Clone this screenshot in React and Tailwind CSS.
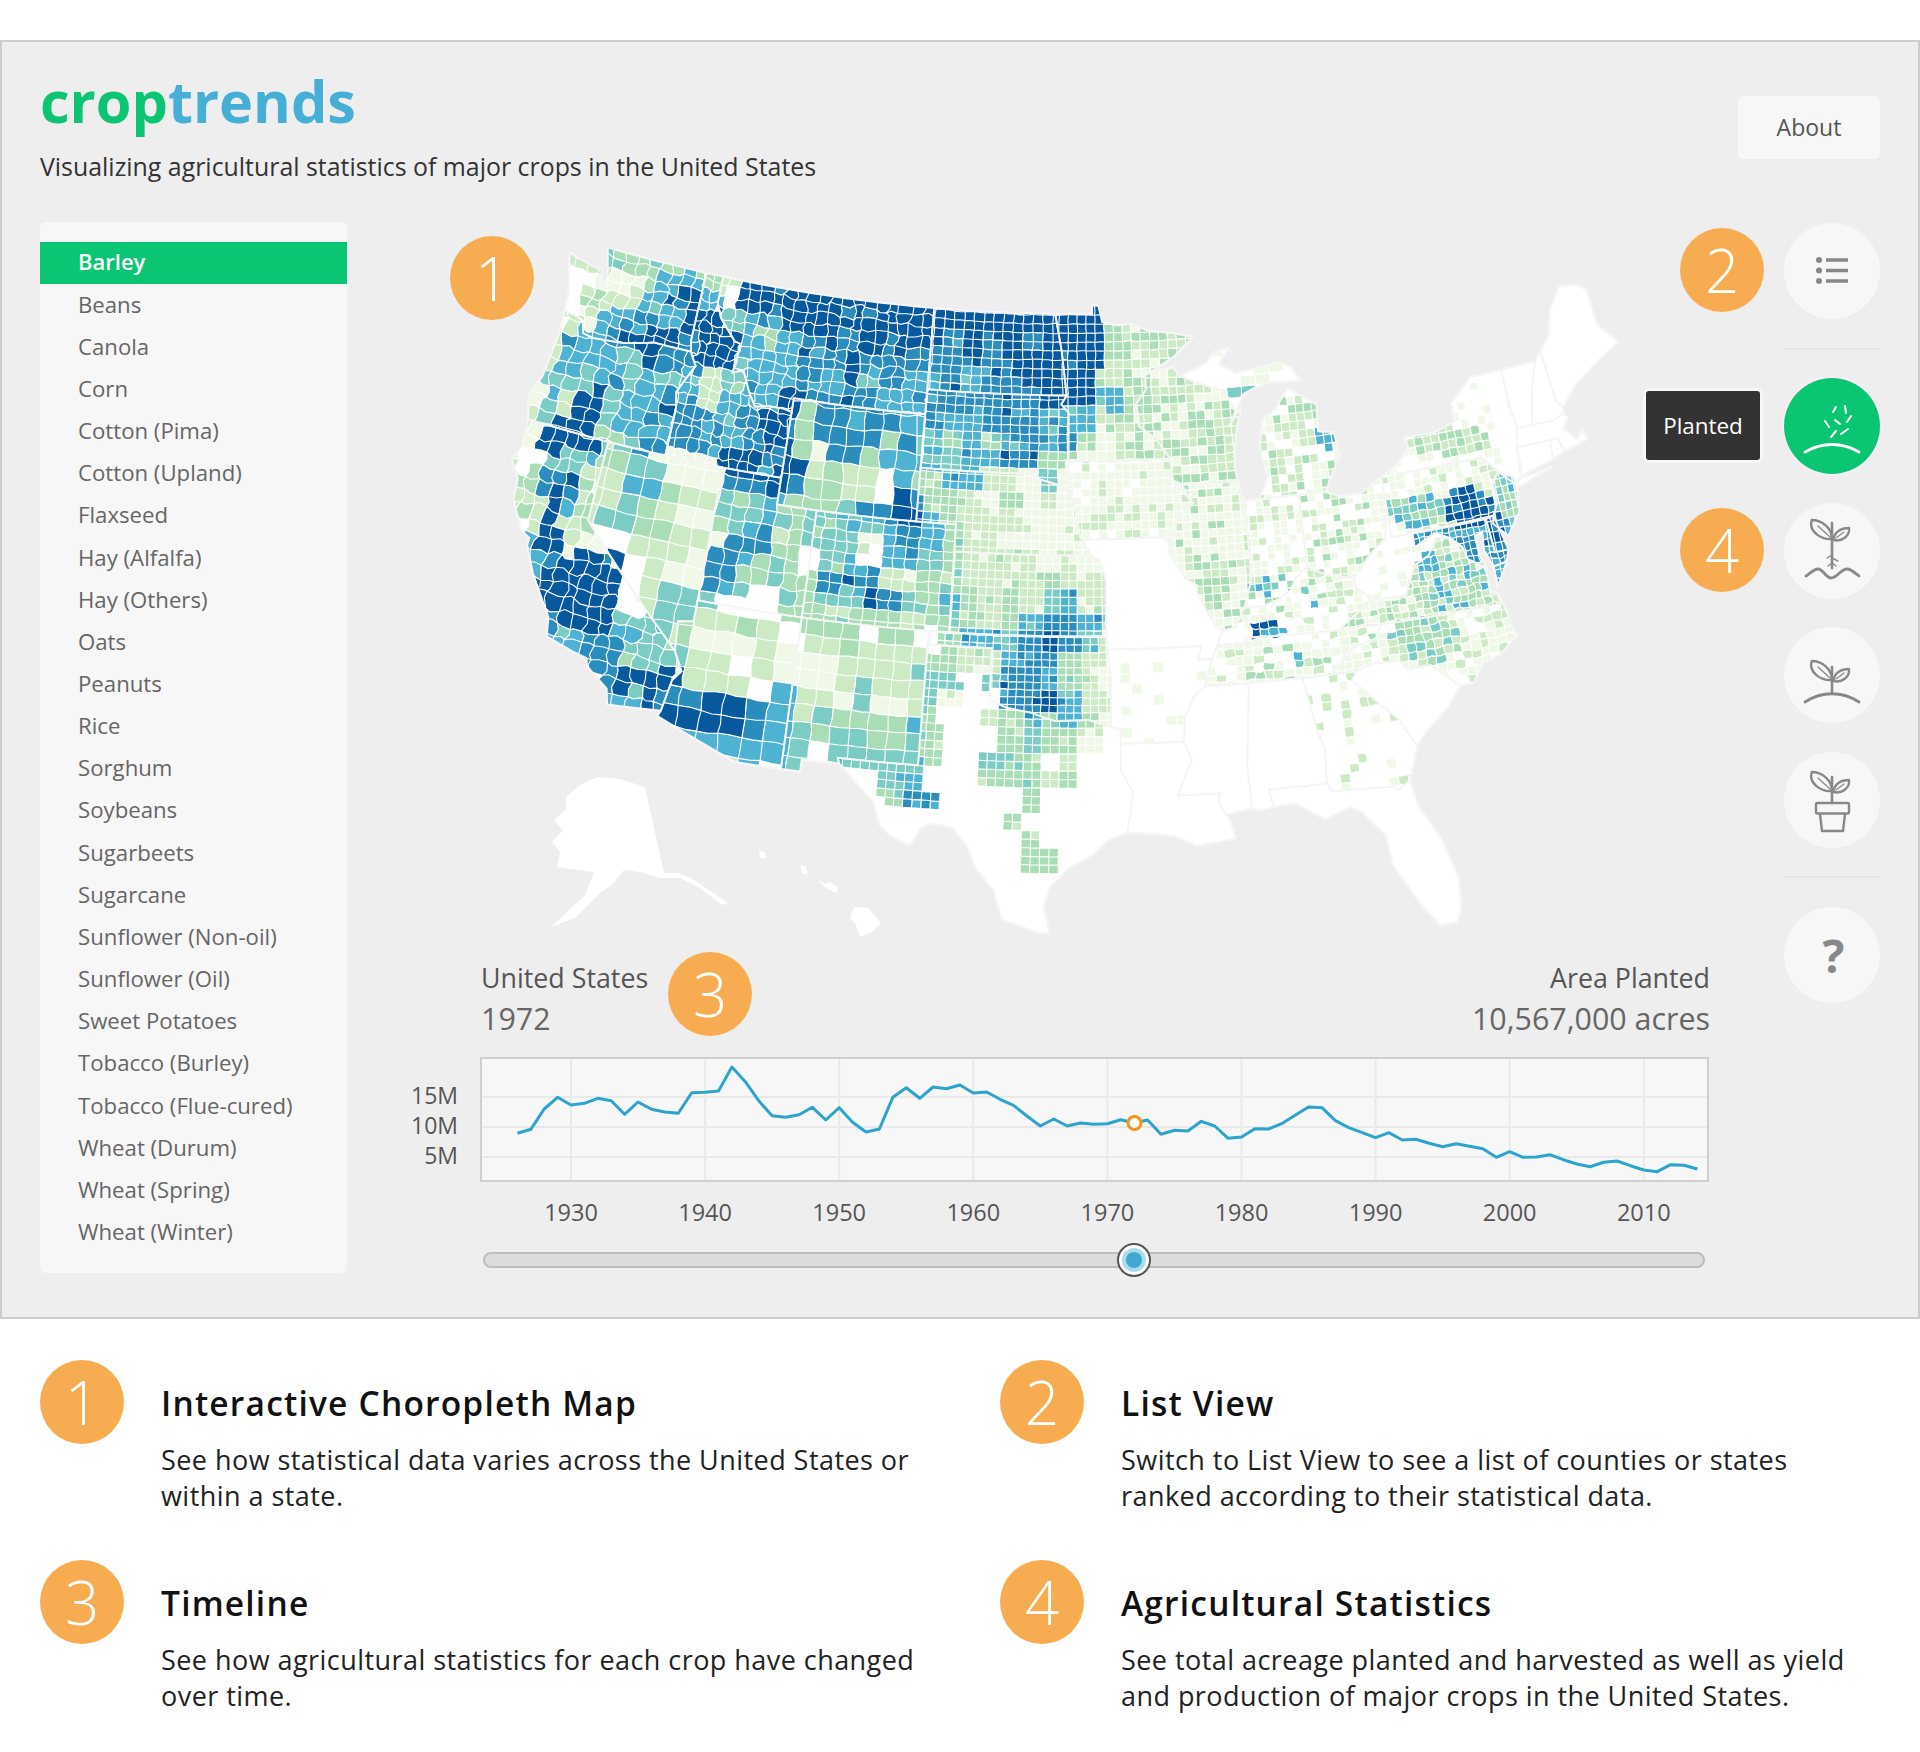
import React from "react";

const CROPS = [
  "Barley", "Beans", "Canola", "Corn", "Cotton (Pima)", "Cotton (Upland)", "Flaxseed", "Hay (Alfalfa)",
  "Hay (Others)", "Oats", "Peanuts", "Rice", "Sorghum", "Soybeans", "Sugarbeets", "Sugarcane",
  "Sunflower (Non-oil)", "Sunflower (Oil)", "Sweet Potatoes", "Tobacco (Burley)", "Tobacco (Flue-cured)",
  "Wheat (Durum)", "Wheat (Spring)", "Wheat (Winter)",
];

const LEVELS = ["#ffffff", "#f0f9e8", "#ccebc5", "#a8ddb5", "#7bccc4", "#4eb3d3", "#2b8cbe", "#08589e"];

// colour levels for the west and plains, one char per 20px from x=500, one row per 20px from y=230
const FIELD = [
  "0000 0330 0000 0000 0000 0000 0000 0000",
  "0002 2433 3551 7777 7777 7777 7777 7777",
  "0000 0113 5532 7777 7777 7777 7777 7733",
  "0000 3225 7750 7777 7777 7777 7676 7733",
  "0002 1556 5774 5677 7777 7777 7777 7732",
  "0026 5677 7677 5356 7676 7767 6767 7732",
  "0025 5547 6677 5556 6766 6667 6777 7732",
  "0144 4545 5524 5556 5746 5565 6677 7722",
  "0142 7455 6525 5576 6665 5666 6667 7752",
  "0247 7456 6665 6773 6666 5555 6665 5521",
  "2277 7346 6665 6773 6663 6435 3565 6211",
  "2044 5344 1117 7671 6635 5545 5663 3111",
  "3366 2255 1116 6763 3320 5355 2214 1111",
  "2275 2243 3224 4533 3220 6332 1312 1111",
  "0272 2443 3214 4544 4556 7532 2211 1111",
  "0571 1022 2216 6624 4415 6532 2111 1111",
  "0567 7702 2166 5330 4505 5432 2221 2121",
  "0777 7702 1165 3433 6662 2332 2223 2222",
  "0077 7702 4440 0033 4476 4353 2324 5222",
  "0067 7744 4422 3233 3333 2343 2356 6532",
  "0055 6644 4211 1202 2303 3035 5467 6421",
  "0005 6644 4222 0211 1222 2332 2566 3221",
  "0000 0677 7122 0211 1242 2440 4665 3211",
  "0000 0557 6677 6652 1141 2410 0667 5221",
  "0000 0000 6677 6552 3333 5300 2353 5311",
  "0000 0000 0555 5554 4433 4300 0343 3100",
  "0000 0000 0002 5540 4444 4300 4430 2000",
  "0000 0000 0000 0000 0004 5000 3332 3000",
  "0000 0000 0000 0000 0003 6600 0030 0000",
  "0000 0000 0000 0000 0000 0000 0300 0000",
  "0000 0000 0000 0000 0000 0000 0030 0000",
  "0000 0000 0000 0000 0000 0000 0033 0000",
].map((row) => row.replace(/ /g, ""));

// [name, cell width deg, cell height deg, wiggle, colour picks (null = use FIELD), outline]
const STATES = [
  ["WA", 0.65, 0.42, 0.4, null, [[-124.7,48.4],[-123.2,48.15],[-122.75,48.15],[-122.45,47.4],[-122.3,47.9],[-122.5,48.4],[-122.75,49],[-117.03,49],[-117.04,46.42],[-116.92,45.99],[-118.98,46],[-119.3,45.93],[-120.5,45.7],[-121.2,45.65],[-122.2,45.58],[-122.75,45.65],[-122.95,46.1],[-123.4,46.2],[-124.05,46.27],[-124.1,46.9],[-124.4,47.6]]],
  ["OR", 0.75, 0.5, 0.4, null, [[-124.05,46.27],[-123.4,46.2],[-122.95,46.1],[-122.75,45.65],[-122.2,45.58],[-121.2,45.65],[-120.5,45.7],[-119.3,45.93],[-118.98,46],[-116.92,45.99],[-116.5,45.5],[-116.9,44.9],[-117.2,44.4],[-117.03,43.8],[-117.03,42],[-124.2,42],[-124.55,42.85],[-124.15,43.7],[-124.05,44.7],[-123.95,45.6]]],
  ["CA", 0.65, 0.5, 0.4, null, [[-124.2,42],[-120,42],[-120,39],[-114.63,35],[-114.15,34.3],[-114.5,33.9],[-114.72,32.72],[-117.12,32.53],[-117.3,33.1],[-118.4,33.75],[-118.5,34.03],[-119.2,34.15],[-120.5,34.45],[-120.65,35.15],[-121.9,36.6],[-122.5,37.5],[-122.5,37.8],[-123,38],[-123.75,39],[-123.85,39.8],[-124.4,40.4],[-124.1,41]]],
  ["NV", 0.95, 0.72, 0.12, null, [[-120,42],[-114.04,42],[-114.04,36.2],[-114.75,36.1],[-114.63,35],[-120,39]]],
  ["ID", 0.55, 0.4, 0.45, null, [[-117.03,49],[-116.05,49],[-116.05,48],[-115.7,47.45],[-114.7,46.7],[-114.35,46.65],[-114.5,45.55],[-113.95,45.7],[-113.45,44.95],[-113,44.45],[-112.3,44.55],[-111.5,44.55],[-111.05,44.48],[-111.05,42],[-117.03,42],[-117.03,43.8],[-117.2,44.4],[-116.9,44.9],[-116.5,45.5],[-116.92,45.99],[-117.04,46.42]]],
  ["MT", 0.65, 0.42, 0.4, null, [[-116.05,49],[-104.05,49],[-104.05,45],[-111.05,45],[-111.05,44.48],[-111.5,44.55],[-112.3,44.55],[-113,44.45],[-113.45,44.95],[-113.95,45.7],[-114.5,45.55],[-114.35,46.65],[-114.7,46.7],[-115.7,47.45],[-116.05,48]]],
  ["WY", 0.9, 0.68, 0.2, null, [[-111.05,45],[-104.05,45],[-104.05,41],[-111.05,41]]],
  ["UT", 0.75, 0.55, 0.25, null, [[-114.04,42],[-111.05,42],[-111.05,41],[-109.05,41],[-109.05,37],[-114.04,37]]],
  ["CO", 0.6, 0.4, 0.18, null, [[-109.05,41],[-102.05,41],[-102.05,37],[-109.05,37]]],
  ["AZ", 1, 0.75, 0.12, null, [[-114.04,37],[-109.05,37],[-109.05,31.33],[-111.07,31.33],[-114.82,32.5],[-114.72,32.72],[-114.5,33.9],[-114.15,34.3],[-114.63,35],[-114.75,36.1],[-114.04,36.2]]],
  ["NM", 0.85, 0.65, 0.1, null, [[-109.05,37],[-103,37],[-103.05,32],[-106.62,32],[-106.53,31.78],[-108.2,31.78],[-108.2,31.33],[-109.05,31.33]]],
  ["ND", 0.55, 0.34, 0.12, null, [[-104.05,49],[-97.23,49],[-96.85,47.6],[-96.56,45.94],[-104.05,45.94]]],
  ["SD", 0.5, 0.32, 0.12, null, [[-104.05,45.94],[-96.56,45.94],[-96.85,45.6],[-96.45,45.3],[-96.45,43.5],[-96.6,43.5],[-96.45,42.5],[-97.9,42.8],[-98.5,43],[-104.05,43]]],
  ["NE", 0.42, 0.3, 0.04, null, [[-104.05,43],[-98.5,43],[-97.9,42.8],[-96.45,42.5],[-96.1,41.7],[-95.85,40.7],[-95.3,40],[-102.05,40],[-102.05,41],[-104.05,41]]],
  ["KS", 0.4, 0.31, 0.03, null, [[-102.05,40],[-95.3,40],[-94.9,39.8],[-94.6,39.1],[-94.62,37],[-102.05,37]]],
  ["OK", 0.38, 0.28, 0.08, null, [[-103,37],[-94.62,37],[-94.43,35.4],[-94.48,33.64],[-95.5,33.9],[-97,33.85],[-98.1,34.15],[-99.2,34.3],[-100,34.56],[-100,36.5],[-103,36.5]]],
  ["TX", 0.4, 0.32, 0.04, null, [[-106.62,32],[-103.05,32],[-103.04,36.5],[-100,36.5],[-100,34.56],[-99.2,34.3],[-98.1,34.15],[-97,33.85],[-95.5,33.9],[-94.48,33.64],[-94.04,33.55],[-94.04,33],[-94.05,32],[-93.55,31.2],[-93.7,30.3],[-93.85,29.7],[-94.7,29.4],[-95.3,28.9],[-96.4,28.35],[-97.2,27.6],[-97.4,26.9],[-97.15,25.95],[-97.6,25.95],[-99.1,26.4],[-99.5,27.5],[-100.3,28.3],[-100.7,29.1],[-101.4,29.77],[-102.3,29.88],[-102.7,29.7],[-103.15,28.98],[-104,29.3],[-104.5,29.65],[-104.9,30.55],[-106.53,31.78]]],
  ["MN", 0.5, 0.34, 0.1, "~2223331", [[-97.23,49],[-95.15,49],[-95.15,49.38],[-94.8,49.3],[-94.6,48.7],[-93.8,48.55],[-92.95,48.6],[-92,48.3],[-90.8,48.2],[-89.6,48],[-90.7,47.3],[-92.05,46.75],[-92.3,46.65],[-92.3,46.1],[-92.85,45.6],[-92.75,45.1],[-92.75,44.75],[-91.9,44.3],[-91.2,43.5],[-96.45,43.5],[-96.45,45.3],[-96.85,45.6],[-96.56,45.94],[-96.85,47.6]]],
  ["IA", 0.42, 0.31, 0.03, "1111120", [[-96.45,43.5],[-91.2,43.5],[-91.1,42.7],[-90.15,41.8],[-91.05,41.2],[-91.1,40.7],[-91.42,40.38],[-91.7,40.6],[-95.77,40.58],[-95.85,40.7],[-96.1,41.7],[-96.45,42.5]]],
  ["MO", 0.5, 0.4, 0.05, "0", [[-95.77,40.58],[-91.7,40.6],[-91.42,40.38],[-91.5,40],[-90.7,39],[-90.2,38.75],[-90.2,38.4],[-89.5,37.3],[-89.15,37],[-89.4,36.5],[-89.7,36],[-90.37,36],[-90.15,36.5],[-94.62,36.5],[-94.62,37],[-94.6,39.1],[-94.9,39.8],[-95.3,40]]],
  ["AR", 0.5, 0.4, 0.1, "00000001", [[-94.62,36.5],[-90.15,36.5],[-90.37,36],[-89.7,36],[-90.1,35],[-90.6,34.7],[-91.1,33.9],[-91.2,33],[-94.04,33],[-94.04,33.55],[-94.48,33.64],[-94.43,35.4]]],
  ["LA", 0.5, 0.4, 0.1, "0", [[-94.04,33],[-91.2,33],[-90.9,32.3],[-91.6,31],[-89.75,31],[-89.85,30.67],[-89.55,30.2],[-89.4,30],[-89.2,29.3],[-89.9,29.2],[-90.9,29.1],[-91.8,29.5],[-92.6,29.6],[-93.85,29.7],[-93.7,30.3],[-93.55,31.2],[-94.05,32]]],
  ["MS", 0.5, 0.4, 0.1, "0", [[-91.2,33],[-91.1,33.9],[-90.6,34.7],[-90.1,35],[-88.2,35],[-88.1,34.9],[-88.47,31.9],[-88.4,30.35],[-89.55,30.2],[-89.85,30.67],[-89.75,31],[-91.6,31],[-90.9,32.3]]],
  ["AL", 0.5, 0.4, 0.1, "0", [[-88.2,35],[-85.6,35],[-85.18,32.87],[-84.95,32.3],[-85.05,31],[-87.6,31],[-87.45,30.35],[-88,30.25],[-88.4,30.35],[-88.47,31.9],[-88.1,34.9]]],
  ["GA", 0.42, 0.34, 0.15, "000000000012", [[-85.6,35],[-83.1,35],[-83.35,34.7],[-82.5,33.9],[-81.5,33],[-81,32.1],[-80.85,32],[-81.45,30.7],[-82.05,30.4],[-82.2,30.57],[-84.85,30.7],[-85.05,31],[-84.95,32.3],[-85.18,32.87]]],
  ["FL", 0.5, 0.4, 0.1, "0", [[-87.6,31],[-85.05,31],[-84.85,30.7],[-82.2,30.57],[-82.05,30.4],[-81.45,30.7],[-81.25,29.7],[-80.5,28.4],[-80.05,26.8],[-80.15,25.7],[-80.4,25.2],[-81.1,25.15],[-81.8,26.1],[-82.7,27.7],[-82.8,28.8],[-83.7,29.8],[-84.2,30.05],[-85.3,29.68],[-86.5,30.4],[-87.45,30.35]]],
  ["SC", 0.5, 0.4, 0.1, "0", [[-83.1,35],[-82.3,35.2],[-81.05,35.15],[-80.8,34.82],[-79.67,34.8],[-78.55,33.86],[-79.2,33.2],[-80.45,32.35],[-80.85,32],[-81,32.1],[-81.5,33],[-82.5,33.9],[-83.35,34.7]]],
  ["NC", 0.42, 0.3, 0.3, "0112", [[-84.32,35],[-83.1,35],[-82.3,35.2],[-81.05,35.15],[-80.8,34.82],[-79.67,34.8],[-78.55,33.86],[-77.9,33.9],[-77.3,34.55],[-76.5,34.7],[-75.55,35.25],[-75.85,36.55],[-81.68,36.59],[-82,36.1],[-82.9,35.95]]],
  ["TN", 0.45, 0.3, 0.3, "00011123", [[-90.1,35],[-89.7,36],[-89.4,36.5],[-88.07,36.5],[-88.07,36.68],[-83.68,36.6],[-81.68,36.59],[-82,36.1],[-82.9,35.95],[-84.3,35],[-88.2,35]]],
  ["KY", 0.42, 0.28, 0.3, "00112", [[-89.4,36.5],[-89.15,37],[-88.5,37.1],[-88,37.8],[-87.1,37.8],[-86.3,38],[-85.7,38.3],[-85.4,38.7],[-84.8,39.1],[-84.2,38.8],[-83.7,38.65],[-82.6,38.42],[-82.6,38.15],[-81.97,37.54],[-83.68,36.6],[-88.07,36.68],[-88.07,36.5]]],
  ["IL", 0.42, 0.3, 0.06, "11111223", [[-90.65,42.5],[-87.8,42.5],[-87.6,41.85],[-87.53,41.7],[-87.53,39.35],[-87.6,38.7],[-88,37.8],[-88.5,37.1],[-89.15,37],[-89.5,37.3],[-90.2,38.4],[-90.2,38.75],[-90.7,39],[-91.5,40],[-91.42,40.38],[-91.1,40.7],[-91.05,41.2],[-90.15,41.8]]],
  ["IN", 0.38, 0.28, 0.05, "0001112", [[-87.53,41.7],[-87.2,41.75],[-84.8,41.76],[-84.8,39.1],[-85.4,38.7],[-85.7,38.3],[-86.3,38],[-87.1,37.8],[-88,37.8],[-87.6,38.7],[-87.53,39.35]]],
  ["OH", 0.38, 0.28, 0.1, "0011123", [[-84.8,41.76],[-83.45,41.73],[-82.7,41.5],[-81.7,41.5],[-80.52,41.98],[-80.52,40.64],[-80.85,39.7],[-81.7,39.2],[-82.6,38.42],[-83.7,38.65],[-84.2,38.8],[-84.8,39.1]]],
  ["MI", 0.42, 0.32, 0.04, "1112230", [[-86.8,41.76],[-84.8,41.76],[-83.45,41.73],[-83.1,42.2],[-82.45,43],[-82.6,43.9],[-83.4,44],[-83.3,45],[-84.7,45.75],[-85.5,45],[-86.2,44.7],[-86.5,43.7],[-86.25,42.5]]],
  ["UP", 0.8, 0.4, 0.1, "0001", [[-90.4,46.55],[-89,46.95],[-88.4,47.4],[-87.7,47.45],[-88.3,46.9],[-87.4,46.5],[-85,46.75],[-84.4,46.5],[-84,46],[-84.7,46],[-85.5,46.05],[-86.5,45.9],[-87.1,45.7],[-87.6,45.1],[-88.1,45.9],[-89.1,46.15]]],
  ["WI", 0.46, 0.33, 0.1, "1122233", [[-92.05,46.75],[-90.8,46.9],[-90.4,46.55],[-89.1,46.15],[-88.1,45.9],[-87.6,45.1],[-88,44.55],[-87.3,45.2],[-87.7,44.2],[-87.9,43],[-87.8,42.5],[-90.65,42.5],[-91.1,42.7],[-91.2,43.5],[-91.9,44.3],[-92.75,44.75],[-92.75,45.1],[-92.85,45.6],[-92.3,46.1],[-92.3,46.65]]],
  ["PA", 0.42, 0.3, 0.2, "0112", [[-80.52,41.98],[-79.76,42.27],[-79.76,42],[-75.35,42],[-74.7,41.35],[-75.1,40.95],[-75.1,40.2],[-75.4,39.8],[-80.52,39.72]]],
  ["NY", 0.42, 0.32, 0.15, "00001", [[-79.76,42.27],[-78.9,42.85],[-79.05,43.27],[-77.5,43.25],[-76.3,43.5],[-76.3,44.2],[-75,45],[-73.35,45],[-73.35,43.6],[-73.25,42.75],[-73.5,42.05],[-73.5,41.3],[-73.65,41],[-74,40.75],[-74.7,41.35],[-75.35,42],[-79.76,42]]],
  ["LI", 0.5, 0.4, 0.1, "0", [[-74,40.6],[-72,41.05],[-73.7,40.9]]],
  ["NJ", 0.3, 0.3, 0.1, "33445", [[-74.7,41.35],[-74,41],[-74,40.45],[-74.1,39.75],[-74.9,38.95],[-75.5,39.5],[-75.4,39.8],[-75.1,40.2],[-75.1,40.95]]],
  ["DE", 0.3, 0.4, 0.1, "556", [[-75.8,39.72],[-75.4,39.8],[-75.05,38.45],[-75.7,38.45]]],
  ["MD", 0.3, 0.26, 0.3, "56", [[-79.48,39.72],[-75.8,39.72],[-75.7,38.45],[-75.05,38.45],[-75.25,38.03],[-75.9,37.95],[-76.2,38.6],[-76.1,39.3],[-76.5,39.2],[-76.45,38.4],[-76.3,38],[-77.05,38.4],[-77.2,38.9],[-77.7,39.3],[-78.4,39.6],[-79.48,39.2]]],
  ["VA", 0.36, 0.26, 0.35, "1223", [[-83.68,36.6],[-75.85,36.55],[-76,37],[-76.3,37],[-76.3,38],[-77.05,38.4],[-77.2,38.9],[-77.7,39.3],[-78.35,39.4],[-78.9,38.8],[-79.65,38.55],[-80.3,37.5],[-81.97,37.54]]],
  ["ES", 0.3, 0.3, 0.1, "5", [[-75.25,38.03],[-75.95,37.15],[-75.9,37.95]]],
  ["WV", 0.45, 0.3, 0.2, "00001", [[-82.6,38.42],[-81.7,39.2],[-80.85,39.7],[-80.52,40.64],[-80.52,39.72],[-79.48,39.72],[-79.48,39.2],[-78.4,39.6],[-77.7,39.3],[-78.35,39.4],[-78.9,38.8],[-79.65,38.55],[-80.3,37.5],[-81.97,37.54],[-82.6,38.15]]],
  ["CT", 0.5, 0.4, 0.1, "0", [[-73.5,42.05],[-71.8,42.02],[-71.85,41.32],[-73.65,41]]],
  ["RI", 0.5, 0.4, 0.1, "0", [[-71.8,42.02],[-71.38,42.02],[-71.2,41.5],[-71.85,41.32]]],
  ["MA", 0.5, 0.4, 0.1, "0", [[-73.5,42.05],[-73.25,42.75],[-71.3,42.7],[-70.8,42.87],[-70.6,42.65],[-71,42.3],[-70.6,41.95],[-70.5,41.78],[-70.05,42.05],[-69.95,41.7],[-71.2,41.5],[-71.38,42.02]]],
  ["VT", 0.5, 0.4, 0.1, "0", [[-73.35,45],[-71.5,45],[-72.05,44],[-72.45,42.73],[-73.25,42.75],[-73.35,43.6]]],
  ["NH", 0.5, 0.4, 0.1, "0", [[-71.5,45],[-71.08,45.3],[-70.98,43.4],[-70.7,43.07],[-70.8,42.87],[-71.3,42.7],[-72.45,42.73],[-72.05,44]]],
  ["ME", 0.5, 0.4, 0.1, "0", [[-71.08,45.3],[-70.4,45.8],[-70,46.7],[-69.2,47.45],[-68.3,47.35],[-67.8,47.07],[-67.8,45.7],[-67,44.85],[-68.5,44.3],[-69.8,43.75],[-70.7,43.07],[-70.98,43.4]]],
];

// eastern pockets, in page pixels: [cx, cy, rx, ry, picks]
const POCKETS = [
  [1467, 507, 26, 22, "6777"], [1497, 533, 13, 22, "567"], [1428, 563, 11, 12, "55"],
  [1414, 510, 28, 18, "3445"], [1449, 585, 38, 28, "23345"], [1425, 640, 42, 22, "2334"],
  [1402, 650, 14, 8, "55"], [1266, 628, 17, 10, "567"], [1285, 593, 40, 17, "01345"],
  [1450, 440, 42, 14, "2233"], [1326, 438, 10, 12, "455"], [1241, 390, 9, 14, "43"],
  [1226, 453, 12, 34, "2233"], [1170, 300, 24, 24, "0"], [1296, 660, 8, 8, "45"],
  [1216, 580, 14, 26, "233"], [1536, 495, 10, 12, "45"],
];

const RAD = Math.PI / 180;

const project = (lon, lat) => {
  const rho = Math.sqrt(1.3512 - 1.2057 * Math.sin(lat * RAD)) / 0.60285;
  const theta = 0.60285 * (lon + 96) * RAD;
  return [1077.1 + 1533 * rho * Math.sin(theta), -1375 + 1533 * rho * Math.cos(theta)];
};

const hash = (a, b, c = 0) => {
  const s = Math.sin(a * 127.1 + b * 311.7 + c * 74.7) * 43758.5453;
  return s - Math.floor(s);
};

const pt = (lon, lat) => {
  const [x, y] = project(lon, lat);
  return `${x.toFixed(1)} ${y.toFixed(1)}`;
};

const outlinePath = (points) => {
  let d = "";
  points.forEach((p, i) => {
    const q = points[(i + 1) % points.length];
    const steps = Math.max(1, Math.ceil(Math.abs(q[0] - p[0])));
    for (let s = 0; s < steps; s++) {
      const t = s / steps;
      d += (d ? "L" : "M") + pt(p[0] + (q[0] - p[0]) * t, p[1] + (q[1] - p[1]) * t);
    }
  });
  return d + "Z";
};

const pickLevel = (picks, lon, lat, si, i, j) => {
  const [x, y] = project(lon, lat);
  const r = hash(i, j, si + 5);
  if (picks === null || (picks[0] === "~" && x < 1120)) {
    const row = FIELD[Math.floor((y - 230) / 20)] || "";
    let level = Number(row[Math.floor((x - 500) / 20)] || 0);
    if (level > 0 && level < 7 && r < 0.06) level += 1;
    else if (level > 1 && r > (level === 7 ? 0.97 : 0.93)) level -= 1;
    return level;
  }
  for (const [cx, cy, rx, ry, p] of POCKETS) {
    const dx = (x - cx) / rx;
    const dy = (y - cy) / ry;
    if (dx * dx + dy * dy < 1) return Number(p[Math.floor(r * p.length)]);
  }
  const pool = picks.replace("~", "");
  return Number(pool[Math.floor(r * pool.length)]);
};

const buildStates = () =>
  STATES.map(([name, dx, dy, wiggle, picks, points], si) => {
    const lons = points.map((p) => p[0]);
    const lats = points.map((p) => p[1]);
    const corner = (i, j) => [
      i * dx + (hash(i, j, si) - 0.5) * dx * wiggle,
      j * dy + (hash(j, i, si + 1) - 0.5) * dy * wiggle,
    ];
    const mid = (a, b, k1, k2) => [
      (a[0] + b[0]) / 2 + (hash(k1, k2, si + 2) - 0.5) * dx * wiggle,
      (a[1] + b[1]) / 2 + (hash(k2, k1, si + 3) - 0.5) * dy * wiggle,
    ];
    const paths = {};
    const i0 = Math.floor(Math.min(...lons) / dx) - 1;
    const i1 = Math.ceil(Math.max(...lons) / dx) + 1;
    const j0 = Math.floor(Math.min(...lats) / dy) - 1;
    const j1 = Math.ceil(Math.max(...lats) / dy) + 1;
    for (let i = i0; i < i1; i++) {
      for (let j = j0; j < j1; j++) {
        const level = pickLevel(picks, (i + 0.5) * dx, (j + 0.5) * dy, si, i, j);
        if (!level) continue;
        const a = corner(i, j);
        const b = corner(i + 1, j);
        const c = corner(i + 1, j + 1);
        const e = corner(i, j + 1);
        const ring = [
          a, mid(a, b, i * 2 + 1, j * 2), b, mid(b, c, i * 2 + 2, j * 2 + 1),
          c, mid(e, c, i * 2 + 1, j * 2 + 2), e, mid(a, e, i * 2, j * 2 + 1),
        ];
        paths[level] = (paths[level] || "") + "M" + ring.map((p) => pt(p[0], p[1])).join("L") + "Z";
      }
    }
    return { name, outline: outlinePath(points), paths };
  });

const MAP_STATES = buildStates();

const UsMap = () => (
  <svg viewBox="347 222 1365 730" className="block w-[1365px] h-[730px]">
    <defs>
      {MAP_STATES.map((s) => (
        <clipPath key={s.name} id={`clip-${s.name}`}>
          <path d={s.outline} />
        </clipPath>
      ))}
    </defs>
    {MAP_STATES.map((s) => (
      <path key={s.name} d={s.outline} fill="#fff" stroke="#fff" strokeWidth="2" />
    ))}
    {MAP_STATES.map((s) => (
      <g key={s.name} clipPath={`url(#clip-${s.name})`}>
        {Object.entries(s.paths).map(([level, d]) => (
          <path key={level} d={d} fill={LEVELS[level]} stroke="#fff" strokeWidth="1.1" />
        ))}
      </g>
    ))}
    {MAP_STATES.map((s) => (
      <path key={s.name} d={s.outline} fill="none" stroke="#f5f5f5" strokeWidth="1.8" />
    ))}
    {/* Alaska and Hawaii */}
    <path
      d="M597 777L620 779L645 787L664 873L678 873L691 878L712 892L728 903L722 905L700 888L680 878L660 878L640 872L624 870L612 885L600 893L575 918L551 927L585 895L594 872L578 870L557 867L560 852L552 842L563 830L554 820L566 810L566 797L580 785Z"
      fill="#fff"
    />
    <path d="M854 907L868 908L881 923L872 932L860 937L856 925L850 918Z" fill="#fff" />
    <path d="M759 851L765 852L766 858L760 858Z M800 865L806 867L808 875L802 873Z M818 880L826 884L830 882L838 888L836 893L826 888Z" fill="#fff" />
  </svg>
);

const ACRES = [
  580, 568, 507, 472, 495, 490, 475, 482, 523, 486, 508, 516, 520, 458, 457, 453, 381, 425, 482, 527, 532, 524, 502,
  540, 503, 547, 576, 567, 472, 443, 475, 441, 446, 435, 459, 456, 478, 496, 528, 558, 537, 558, 549, 553, 551, 539,
  549, 540, 583, 571, 573, 544, 558, 595, 591, 566, 567, 551, 526, 501, 503, 542, 563, 578, 593, 578, 600, 598, 610,
  620, 611, 619, 626, 652, 635, 652, 651, 644, 659, 672, 680, 667, 663, 677, 690, 695, 674, 676, 687,
];

const chartX = (year) => 571 + (year - 1930) * 13.41;
const LINE_POINTS = ACRES.map((v, i) => `${chartX(1926 + i).toFixed(1)},${(940 + v / 3).toFixed(1)}`).join(" ");
const DECADES = [1930, 1940, 1950, 1960, 1970, 1980, 1990, 2000, 2010];
const Y_TICKS = [["15M", 1097], ["10M", 1127], ["5M", 1157]];

const Timeline = () => (
  <svg viewBox="400 1050 1320 180" className="block w-[1320px] h-[180px] ml-[53px]">
    <rect x="481" y="1058" width="1227" height="123" fill="#f7f7f7" />
    {DECADES.map((y) => (
      <line key={y} x1={chartX(y)} x2={chartX(y)} y1="1058" y2="1181" stroke="#e9e9e9" strokeWidth="2" />
    ))}
    {Y_TICKS.map(([label, y]) => (
      <line key={label} x1="481" x2="1708" y1={y} y2={y} stroke="#e9e9e9" strokeWidth="2" />
    ))}
    <rect x="481" y="1058" width="1227" height="123" fill="none" stroke="#cfcfcf" strokeWidth="2" />
    <polyline points={LINE_POINTS} fill="none" stroke="#2ca4cc" strokeWidth="3" strokeLinejoin="round" />
    <circle cx="1134.5" cy="1123" r="6.5" fill="#fff" stroke="#f7941e" strokeWidth="3" />
    {Y_TICKS.map(([label, y]) => (
      <text key={label} x="458" y={y + 7} textAnchor="end" fontSize="23" fill="#555">
        {label}
      </text>
    ))}
    {DECADES.map((y) => (
      <text key={y} x={chartX(y)} y="1220.5" textAnchor="middle" fontSize="23.5" fill="#555">
        {y}
      </text>
    ))}
  </svg>
);

const Badge = ({ n, className = "" }) => (
  <div
    className={`w-[84px] h-[84px] rounded-full bg-[#f8ac52] text-white text-[60px] font-light leading-[84px] text-center shrink-0 ${className}`}
  >
    {n}
  </div>
);

const Leaves = ({ y }) => (
  <g>
    <path d={`M48 ${y + 19} C38 ${y + 20} 24 ${y + 12} 27.7 ${y} C38 ${y} 48 ${y + 8} 48 ${y + 19}Z`} />
    <path d={`M49.5 ${y + 20} C50 ${y + 12} 57 ${y + 8} 65 ${y + 8} C66 ${y + 16} 58 ${y + 22} 49.5 ${y + 20}Z`} />
    <path d={`M34 ${y + 6} L46 ${y + 17} M60 ${y + 12} L52 ${y + 18}`} strokeWidth="1.2" />
  </g>
);

const IconCircle = ({ children, active }) => (
  <div
    className={`w-[96px] h-[96px] rounded-full flex items-center justify-center ${
      active ? "bg-[#0ac673] shadow-[0_0_0_2px_#f7eef5]" : "bg-[#f7f7f7]"
    }`}
  >
    {children}
  </div>
);

const Glyph = ({ children, color = "#888" }) => (
  <svg viewBox="0 0 96 96" className="w-[96px] h-[96px]" fill="none" stroke={color} strokeWidth="2.4" strokeLinecap="round" strokeLinejoin="round">
    {children}
  </svg>
);

const SideNav = () => (
  <nav className="relative w-[96px] ml-[72px] mt-[1px] flex flex-col gap-[28.5px]">
    <IconCircle>
      <Glyph>
        <path d="M42 37H64M42 47.5H64M42 58H64" strokeWidth="3.4" strokeLinecap="butt" />
        <circle cx="35" cy="37" r="3" fill="#888" stroke="none" />
        <circle cx="35" cy="47.5" r="3" fill="#888" stroke="none" />
        <circle cx="35" cy="58" r="3" fill="#888" stroke="none" />
      </Glyph>
    </IconCircle>
    <div className="h-[2px] bg-[#e4e4e4]" />
    <div className="relative">
      <IconCircle active>
        <Glyph color="#fff">
          <path d="M21 74C38 64 58 64 75 74" strokeWidth="3" />
          <path d="M49 34L52 29M61 28L62 35M41 43L45 49M51 42L56 46M63 44L67 38M47 59L52 53M57 56L64 51" strokeWidth="2" />
        </Glyph>
      </IconCircle>
      <div className="absolute right-[117px] top-[10px] w-[120px] h-[75px] rounded-[6px] border-[3px] border-[#f7f7f7] bg-[#333] text-white text-[22.4px] flex items-center justify-center">
        Planted
      </div>
    </div>
    <IconCircle>
      <Glyph>
        <Leaves y={17} />
        <path d="M48 20V65" strokeWidth="2.6" />
        <path d="M48 52L43 55M48 55L54 58M48 60L44 63M48 60L52 63" strokeWidth="1.4" />
        <path d="M22 73C27 70 30 66 34 66C39 66 42 75 47 75C53 75 57 66 63 66C67 66 71 70 75 73" strokeWidth="2.8" />
      </Glyph>
    </IconCircle>
    <IconCircle>
      <Glyph>
        <Leaves y={34} />
        <path d="M48 40V66" strokeWidth="2.6" />
        <path d="M21 75C38 64 58 64 75 75" strokeWidth="2.8" />
      </Glyph>
    </IconCircle>
    <IconCircle>
      <Glyph>
        <Leaves y={20} />
        <path d="M48 25V50" strokeWidth="2.6" />
        <rect x="32" y="51" width="33" height="10.5" rx="1.5" />
        <path d="M36 62L38 79H59L61 62" />
      </Glyph>
    </IconCircle>
    <div className="h-[2px] bg-[#e4e4e4]" />
    <IconCircle>
      <span className="pl-[3px] text-[46px] font-bold text-[#888] leading-none">?</span>
    </IconCircle>
  </nav>
);

const FEATURES = [
  { n: 1, title: "Interactive Choropleth Map", lines: ["See how statistical data varies across the United States or", "within a state."] },
  { n: 2, title: "List View", lines: ["Switch to List View to see a list of counties or states", "ranked according to their statistical data."] },
  { n: 3, title: "Timeline", lines: ["See how agricultural statistics for each crop have changed", "over time."] },
  { n: 4, title: "Agricultural Statistics", lines: ["See total acreage planted and harvested as well as yield", "and production of major crops in the United States."] },
];

export default function App() {
  return (
    <div className="w-[1920px] h-[1752px] bg-white pt-[40px] font-['Open_Sans',sans-serif]">
      <div className="relative h-[1279px] border-2 border-[#cccccc] bg-[#eeeeee]">
        <header className="h-[180px] pl-[38px] pr-[38px] flex justify-between">
          <div>
            <div className="text-[57.6px] font-bold leading-[80px] pt-[19px] h-[99px]">
              <span className="text-[#0cc473]">crop</span>
              <span className="text-[#46afd6]">trends</span>
            </div>
            <p className="text-[24.9px] leading-[36px] mt-[7px] text-[#333]">
              Visualizing agricultural statistics of major crops in the United States
            </p>
          </div>
          <button className="mt-[54px] w-[142px] h-[63px] rounded-[6px] bg-[#f7f7f7] text-[23px] text-[#555]">About</button>
        </header>

        <div className="flex">
          <aside className="ml-[38px] w-[307px] h-[1051px] rounded-[6px] bg-[#f7f7f7] pt-[20px]">
            {CROPS.map((crop, i) => (
              <div
                key={crop}
                className={`h-[42.17px] pl-[38px] flex items-center ${
                  i === 0 ? "bg-[#0ac673] text-white font-semibold text-[22px] pb-[4px]" : "text-[#666] text-[22.2px] pb-[2px]"
                }`}
              >
                {crop}
              </div>
            ))}
          </aside>

          <main className="w-[1365px]">
            <UsMap />
            <div className="h-[98px] ml-[134px] mr-[2px] pt-[6px] flex justify-between">
              <div>
                <div className="text-[26.8px] leading-[40px] text-[#555]">United States</div>
                <div className="text-[30.4px] leading-[42px] text-[#666]">1972</div>
              </div>
              <div className="text-right">
                <div className="text-[26.8px] leading-[40px] text-[#555]">Area Planted</div>
                <div className="text-[30.4px] leading-[42px] text-[#666]">10,567,000 acres</div>
              </div>
            </div>
            <Timeline />
            <div className="relative mt-[22px] ml-[136px] w-[1222px] h-[16px] rounded-full bg-[#dcdcdc] border-2 border-[#bdbdbd]">
              <div className="absolute left-[632px] top-[-11px] w-[34px] h-[34px] rounded-full border-2 border-[#555] bg-white flex items-center justify-center">
                <div className="w-[24px] h-[24px] rounded-full bg-[#a9dcec] flex items-center justify-center">
                  <div className="w-[16px] h-[16px] rounded-full bg-[#3fa9d0]" />
                </div>
              </div>
            </div>
          </main>

          <SideNav />
        </div>

        <Badge n={1} className="absolute left-[448px] top-[194px]" />
        <Badge n={2} className="absolute left-[1678px] top-[186px]" />
        <Badge n={4} className="absolute left-[1678px] top-[466px]" />
        <Badge n={3} className="absolute left-[666px] top-[910px]" />
      </div>

      <section className="grid grid-cols-[960px_880px] ml-[40px] mt-[41px] auto-rows-[200px]">
        {FEATURES.map((f) => (
          <div key={f.n} className="flex gap-[37px]">
            <Badge n={f.n} />
            <div className="pt-[20px]">
              <h3 className="text-[33.5px] tracking-[1.2px] font-semibold leading-[46px] text-[#111]">{f.title}</h3>
              <p className="mt-[16px] text-[27px] tracking-[0.45px] leading-[36px] text-[#222]">
                {f.lines[0]}
                <br />
                {f.lines[1]}
              </p>
            </div>
          </div>
        ))}
      </section>
    </div>
  );
}
